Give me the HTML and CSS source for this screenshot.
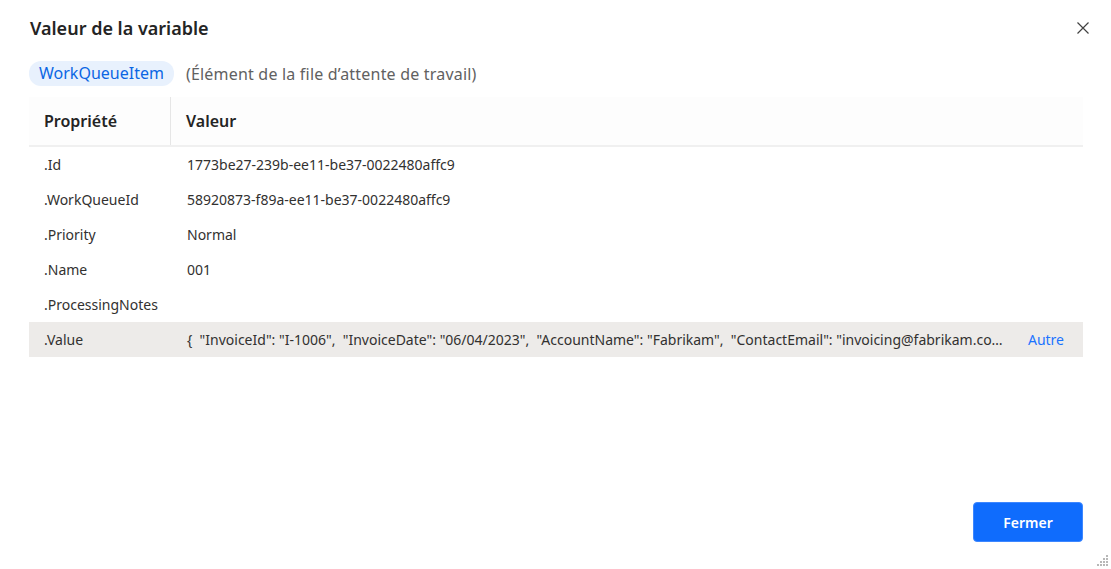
FILE: index.html
```html
<!DOCTYPE html>
<html lang="fr">

<head>
    <meta charset="UTF-8">
    <meta name="viewport" content="width=device-width, initial-scale=1.0">
    <title>Valeur de la variable</title>
    <link rel="stylesheet" href="styles.css">
</head>

<body>
    <div class="dialog">
        <div class="dialog-header">
            <h1 class="dialog-title">Valeur de la variable</h1>
            <button class="close-btn" aria-label="Fermer">
                <svg width="12" height="12" viewBox="0 0 12 12">
                    <path d="M0.5 0.5 L11.5 11.5 M11.5 0.5 L0.5 11.5" stroke="#424242" stroke-width="1.2" fill="none" />
                </svg>
            </button>
        </div>

        <div class="var-line">
            <span class="var-chip">WorkQueueItem</span>
            <span class="var-type">(Élément de la file d’attente de travail)</span>
        </div>

        <div class="table">
            <div class="table-head">
                <div class="col-prop">Propriété</div>
                <div class="col-val">Valeur</div>
            </div>
            <div class="row">
                <div class="col-prop">.Id</div>
                <div class="col-val">1773be27-239b-ee11-be37-0022480affc9</div>
            </div>
            <div class="row">
                <div class="col-prop">.WorkQueueId</div>
                <div class="col-val">58920873-f89a-ee11-be37-0022480affc9</div>
            </div>
            <div class="row">
                <div class="col-prop">.Priority</div>
                <div class="col-val">Normal</div>
            </div>
            <div class="row">
                <div class="col-prop">.Name</div>
                <div class="col-val">001</div>
            </div>
            <div class="row">
                <div class="col-prop">.ProcessingNotes</div>
                <div class="col-val"></div>
            </div>
            <div class="row row-selected">
                <div class="col-prop">.Value</div>
                <div class="col-val">
                    <span class="val-text">{ &nbsp;"InvoiceId": "I-1006", &nbsp;"InvoiceDate": "06/04/2023", &nbsp;"AccountName": "Fabrikam", &nbsp;"ContactEmail": "invoicing@fabrikam.co…</span>
                    <a class="more-link" href="#">Autre</a>
                </div>
            </div>
        </div>

        <div class="dialog-footer">
            <button class="primary-btn">Fermer</button>
        </div>

        <svg class="grip" width="11" height="11" viewBox="0 0 11 11">
            <g fill="#b8b8b8">
                <rect x="9" y="0" width="2" height="2" />
                <rect x="6" y="3" width="2" height="2" />
                <rect x="9" y="3" width="2" height="2" />
                <rect x="3" y="6" width="2" height="2" />
                <rect x="6" y="6" width="2" height="2" />
                <rect x="9" y="6" width="2" height="2" />
                <rect x="0" y="9" width="2" height="2" />
                <rect x="3" y="9" width="2" height="2" />
                <rect x="6" y="9" width="2" height="2" />
                <rect x="9" y="9" width="2" height="2" />
            </g>
        </svg>
    </div>
</body>

</html>
```

FILE: styles.css
```css
body {
    margin: 0;
    padding: 0;
    font-family: 'Segoe UI', 'Noto Sans', sans-serif;
    background-color: #fff;
    color: #323130;
}

.dialog {
    position: relative;
    height: 569px;
    box-sizing: border-box;
    padding: 16px 28px 0 29px;
}

.dialog-header {
    display: flex;
    align-items: center;
    justify-content: space-between;
    height: 24px;
}

.dialog-title {
    margin: 0;
    font-size: 18px;
    font-weight: 600;
    color: #242424;
    line-height: 24px;
    padding-left: 1px;
}

.close-btn {
    border: none;
    background: none;
    padding: 0;
    margin-right: -6px;
    width: 12px;
    height: 12px;
    display: flex;
    cursor: pointer;
}

.var-line {
    display: flex;
    align-items: center;
    margin-top: 21px;
    height: 25px;
}

.var-chip {
    background-color: #e8f1fd;
    color: #0b66e4;
    font-size: 16px;
    line-height: 25px;
    padding: 0 10px;
    border-radius: 12px;
}

.var-type {
    margin-left: 12px;
    font-size: 16px;
    letter-spacing: 0.2px;
    color: #616161;
}

.table {
    margin-top: 11px;
}

.table-head {
    display: flex;
    height: 48px;
    background-color: #fdfdfd;
    border-bottom: 2px solid #f0f0f0;
    font-size: 16px;
    font-weight: 600;
    color: #242424;
}

.table-head .col-prop {
    border-right: 1px solid #e6e6e6;
}

.col-prop {
    width: 142px;
    box-sizing: border-box;
    padding-left: 15px;
    display: flex;
    align-items: center;
    flex-shrink: 0;
}

.col-val {
    flex: 1;
    min-width: 0;
    padding-left: 16px;
    padding-right: 19px;
    display: flex;
    align-items: center;
}

.table-head .col-val {
    padding-left: 15px;
}

.row {
    display: flex;
    height: 35px;
    font-size: 14px;
}

.row-selected {
    background-color: #edebe9;
}

.val-text {
    flex: 1;
    min-width: 0;
    white-space: pre;
}

.more-link {
    margin-left: 20px;
    color: #1a73ff;
    text-decoration: none;
    font-size: 14px;
}

.dialog-footer {
    position: absolute;
    right: 28px;
    bottom: 27px;
}

.primary-btn {
    width: 110px;
    height: 40px;
    background-color: #0f6cfd;
    border: 1px solid #3d87ff;
    border-radius: 4px;
    color: #fff;
    font-family: inherit;
    font-size: 14px;
    font-weight: 600;
    cursor: pointer;
}

.grip {
    position: absolute;
    right: 3px;
    bottom: 3px;
}
```
